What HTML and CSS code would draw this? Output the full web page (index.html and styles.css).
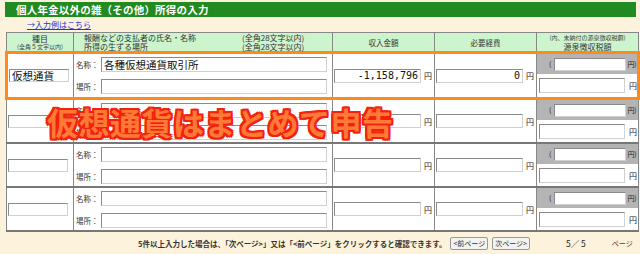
FILE: index.html
```html
<!doctype html>
<html lang="ja">
  <head>
    <meta charset="UTF-8" />
    <title>個人年金以外の雑（その他）所得の入力</title>
    <link rel="stylesheet" href="styles.css">
  </head>
  <body>
    <div class="page">
      <h1 class="title">個人年金以外の雑（その他）所得の入力</h1>
      <a class="guide" href="#">→入力例はこちら</a>

      <table class="income-table">
        <colgroup>
          <col class="c-kind" />
          <col class="c-payer" />
          <col class="c-amount" />
          <col class="c-amount" />
          <col class="c-tax" />
        </colgroup>
        <thead>
          <tr>
            <th>種目<small>(全角５文字以内)</small></th>
            <th class="payer-head">
              <div class="payer-head-grid">
                <span>報酬などの支払者の氏名・名称</span><span>(全角28文字以内)</span>
                <span>所得の生ずる場所</span><span>(全角28文字以内)</span>
              </div>
            </th>
            <th class="narrow">収入金額</th>
            <th class="narrow">必要経費</th>
            <th><small>(内、未納付の源泉徴収税額)</small>源泉徴収税額</th>
          </tr>
        </thead>
        <tbody>
          <tr class="active">
            <td><input class="kind" type="text" value="仮想通貨" /></td>
            <td>
              <div class="payer">
                <label>名称：</label><input class="big" type="text" value="各種仮想通貨取引所" />
                <label>場所：</label><input type="text" />
              </div>
            </td>
            <td><div class="money"><input type="text" value="-1,158,796" /><span>円</span></div></td>
            <td><div class="money"><input type="text" value="0" /><span>円</span></div></td>
            <td class="tax">
              <div class="tax-unpaid">(<input type="text" />円)</div>
              <div class="tax-total"><input type="text" />円</div>
            </td>
          </tr>
          <tr>
            <td><input class="kind" type="text" /></td>
            <td>
              <div class="payer">
                <label>名称：</label><input type="text" />
                <label>場所：</label><input type="text" />
              </div>
            </td>
            <td><div class="money"><input type="text" /><span>円</span></div></td>
            <td><div class="money"><input type="text" /><span>円</span></div></td>
            <td class="tax">
              <div class="tax-unpaid">(<input type="text" />円)</div>
              <div class="tax-total"><input type="text" />円</div>
            </td>
          </tr>
          <tr>
            <td><input class="kind" type="text" /></td>
            <td>
              <div class="payer">
                <label>名称：</label><input type="text" />
                <label>場所：</label><input type="text" />
              </div>
            </td>
            <td><div class="money"><input type="text" /><span>円</span></div></td>
            <td><div class="money"><input type="text" /><span>円</span></div></td>
            <td class="tax">
              <div class="tax-unpaid">(<input type="text" />円)</div>
              <div class="tax-total"><input type="text" />円</div>
            </td>
          </tr>
          <tr>
            <td><input class="kind" type="text" /></td>
            <td>
              <div class="payer">
                <label>名称：</label><input type="text" />
                <label>場所：</label><input type="text" />
              </div>
            </td>
            <td><div class="money"><input type="text" /><span>円</span></div></td>
            <td><div class="money"><input type="text" /><span>円</span></div></td>
            <td class="tax">
              <div class="tax-unpaid">(<input type="text" />円)</div>
              <div class="tax-total"><input type="text" />円</div>
            </td>
          </tr>
        </tbody>
      </table>

      <div class="pager">
        <p class="pager-note">5件以上入力した場合は、「次ページ&gt;」又は「&lt;前ページ」をクリックすると確認できます。</p>
        <button type="button">&lt;前ページ</button>
        <button type="button">次ページ&gt;</button>
        <span class="pager-count">5／&nbsp;5</span>
        <span class="pager-unit">ページ</span>
      </div>

      <div class="callout">仮想通貨はまとめて申告</div>
    </div>
  </body>
</html>
```

FILE: styles.css
```css
* {
  margin: 0;
  padding: 0;
  box-sizing: border-box;
}

body {
  background-color: #fdf3dc;
  font-family: "Noto Sans CJK JP", "Liberation Sans", sans-serif;
  color: #222;
  font-size: 10px;
}

.page {
  position: relative;
  width: 640px;
  padding: 2px 4px 0 5px;
}

.title {
  height: 15px;
  line-height: 15px;
  padding-left: 11px;
  background-color: #218a21;
  color: white;
  font-size: 10.5px;
  font-weight: bold;
  letter-spacing: 0.2px;
}

.guide {
  display: block;
  height: 15px;
  line-height: 15px;
  margin-left: 22px;
  color: #2233dd;
  font-size: 8px;
}

.income-table {
  width: 631px;
  table-layout: fixed;
  border-collapse: collapse;
  border: 1px solid #777;
}

.c-kind { width: 67px; }
.c-payer { width: 259px; }
.c-amount { width: 102px; }
.c-tax { width: 102px; }

.income-table th {
  height: 20px;
  background-color: #cdf5cd;
  border: 1px solid #888;
  font-weight: normal;
  font-size: 8px;
  line-height: 9px;
  color: #333;
  text-align: center;
  vertical-align: middle;
}

.income-table th.narrow {
  font-size: 7.5px;
}

.income-table th small {
  display: block;
  font-size: 6px;
  line-height: 8px;
  color: #444;
}

.income-table th.payer-head {
  text-align: left;
  padding-left: 10px;
}

.payer-head-grid {
  display: grid;
  grid-template-columns: 158px auto;
  white-space: nowrap;
}

.income-table td {
  height: 44px;
  background-color: white;
  border: 1px solid #888;
  border-bottom: 2px solid #777;
  vertical-align: middle;
}

.income-table tr.active td {
  height: 46px;
  border-top: 3px solid #ff8a1c;
  border-bottom: 3px solid #ff8a1c;
}

.income-table tr.active td:first-child {
  border-left: 3px solid #ff8a1c;
}

.income-table tr.active td:last-child {
  border-right: 3px solid #ff8a1c;
}

input {
  height: 14px;
  border: 1px solid #d0d0d0;
  border-top-color: #8a8a8a;
  border-left-color: #8a8a8a;
  background-color: white;
  font-family: "DejaVu Sans Mono", "Noto Sans CJK JP", monospace;
  font-size: 10px;
  padding: 0 2px;
  color: #111;
}

input.kind {
  display: block;
  width: 60px;
  height: 13px;
  margin-left: 1px;
  font-family: "Noto Sans CJK JP", sans-serif;
  font-size: 10.5px;
}

.payer {
  display: grid;
  grid-template-columns: 25px 226px;
  align-items: center;
  row-gap: 7px;
  padding-left: 2px;
}

.payer label {
  font-size: 7.5px;
  white-space: nowrap;
  color: #333;
}

.payer input {
  height: 15px;
}

.payer input.big {
  font-family: "Noto Sans CJK JP", sans-serif;
  font-size: 10.5px;
}

.money {
  display: flex;
  align-items: center;
  gap: 3px;
  padding-left: 1px;
  font-size: 8px;
}

.money input {
  width: 87px;
  text-align: right;
}

.income-table td.tax {
  padding: 0;
  vertical-align: top;
}

.tax-unpaid {
  display: flex;
  align-items: center;
  height: 20px;
  padding-left: 12px;
  background-color: #b4b4b4;
  font-size: 7px;
}

.tax-unpaid input {
  width: 72px;
  height: 13px;
  margin: 0 1px 0 3px;
}

.tax-total {
  display: flex;
  align-items: center;
  height: 22px;
  padding-left: 2px;
  gap: 4px;
  font-size: 8px;
}

.tax-total input {
  width: 86px;
  height: 15px;
}

.pager {
  display: flex;
  align-items: center;
  height: 20px;
  margin-top: 1px;
  font-size: 7.5px;
  white-space: nowrap;
}

.pager-note {
  margin-left: 133px;
  font-weight: bold;
  color: #333;
}

.pager button {
  height: 13px;
  padding: 0 2px;
  margin-left: 4px;
  border: 1px solid #999;
  border-radius: 2px;
  background-color: #f2f2f2;
  font-family: "Noto Sans CJK JP", sans-serif;
  font-size: 7px;
  line-height: 11px;
  color: #333;
}

.pager-count {
  margin-left: 36px;
  font-size: 8.5px;
}

.pager-unit {
  margin-left: 26px;
  font-size: 7px;
  color: #444;
}

/* caption that sits over the table */
.callout {
  position: absolute;
  left: 47px;
  top: 100px;
  font-size: 31px;
  line-height: 44px;
  font-weight: bold;
  letter-spacing: 0.5px;
  color: #ff7a36;
  -webkit-text-stroke: 4px white;
  paint-order: stroke fill;
  text-shadow:
    2px 0 0 #f3220e, -2px 0 0 #f3220e, 0 2px 0 #f3220e, 0 -2px 0 #f3220e,
    2px 2px 0 #f3220e, -2px -2px 0 #f3220e, 2px -2px 0 #f3220e, -2px 2px 0 #f3220e;
}
```
